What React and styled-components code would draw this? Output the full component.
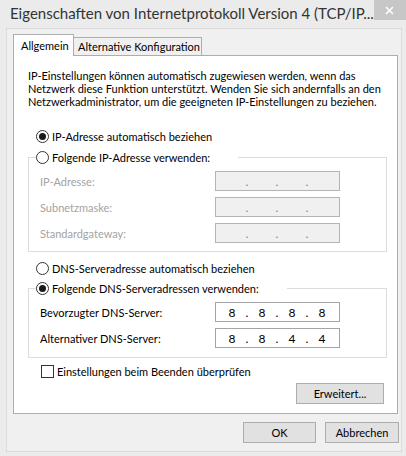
import React from "react";
import styled, { createGlobalStyle } from "styled-components";

const GlobalStyle = createGlobalStyle`
  html, body {
    margin: 0;
    padding: 0;
  }
  body {
    width: 406px;
    height: 456px;
    overflow: hidden;
    background: #ebebeb;
    font-family: Lato, "Liberation Sans", sans-serif;
    font-size: 11px;
    color: #000;
  }
`;

const Window = styled.div`
  width: 406px;
  height: 456px;
  display: flex;
  flex-direction: column;
  background: #ebebeb;
`;

const TitleBar = styled.div`
  height: 28px;
  flex-shrink: 0;
  display: flex;
  align-items: flex-start;
`;

const Title = styled.div`
  flex: 1;
  padding: 4px 0 0 10px;
  font-size: 15px;
  line-height: 18px;
  color: #333;
  white-space: nowrap;
`;

const CloseBox = styled.div`
  width: 33px;
  height: 20px;
  background: #c7c7c7;
  display: flex;
  align-items: center;
  justify-content: center;
`;

const Client = styled.div`
  flex: 1;
  margin: 0 4px 4px 6px;
  border: 1px solid #dadada;
  background: #f0f0f0;
  display: flex;
  flex-direction: column;
  padding: 5px 2px 8px 6px;
`;

const TabStrip = styled.div`
  display: flex;
  align-items: flex-end;
  height: 21px;
  position: relative;
  z-index: 1;
`;

const Tab = styled.div`
  box-sizing: border-box;
  width: ${(p) => p.$w}px;
  height: ${(p) => (p.$active ? 22 : 18)}px;
  margin-bottom: ${(p) => (p.$active ? -1 : 0)}px;
  border: 1px solid #adadad;
  border-bottom: none;
  border-left-width: ${(p) => (p.$active ? 1 : 0)}px;
  background: ${(p) => (p.$active ? "#fff" : "#f0f0f0")};
  padding: ${(p) => (p.$active ? "4px 0 0 7px" : "2px 0 0 4px")};
  line-height: 14px;
  white-space: nowrap;
`;

const Panel = styled.div`
  flex: 1;
  margin-right: 1px;
  border: 1px solid #adadad;
  background: #fff;
  display: flex;
  flex-direction: column;
  padding: 13px 0 9px 0;
`;

const Intro = styled.p`
  margin: 0 0 0 14px;
  line-height: 13px;
  white-space: nowrap;
`;

const OptionRow = styled.label`
  display: flex;
  align-items: center;
  height: 16px;
  margin-top: ${(p) => p.$gap}px;
  padding-left: ${(p) => p.$indent}px;
  white-space: nowrap;
`;

const RadioDot = styled.span`
  box-sizing: border-box;
  width: 13px;
  height: 13px;
  margin-right: 3px;
  border: 1px solid #333;
  border-radius: 50%;
  background: #fff;
  display: flex;
  align-items: center;
  justify-content: center;
  &::after {
    content: "";
    width: 7px;
    height: 7px;
    border-radius: 50%;
    background: ${(p) => (p.$on ? "#1a1a1a" : "transparent")};
  }
`;

const CheckBox = styled.span`
  box-sizing: border-box;
  width: 13px;
  height: 13px;
  margin-right: 3px;
  border: 1px solid #333;
  background: #fff;
`;

const Group = styled.fieldset`
  margin: ${(p) => p.$gap}px 10px 0 14px;
  padding: 6px 0 ${(p) => p.$bottom}px 11px;
  border: 1px solid #dcdcdc;
  min-width: 0;
  display: grid;
  grid-template-columns: 175px 125px;
  row-gap: 6px;
  align-items: center;
`;

const Legend = styled.legend`
  margin-left: -4px;
  padding: 0 28px 0 0;
  height: 16px;
`;

const LegendOption = styled.span`
  display: flex;
  align-items: center;
  height: 16px;
  white-space: nowrap;
`;

const FieldLabel = styled.span`
  color: ${(p) => (p.$disabled ? "#a3a3a3" : "#000")};
  white-space: nowrap;
`;

const AddressBox = styled.div`
  box-sizing: border-box;
  width: 125px;
  height: 20px;
  border: 1px solid ${(p) => (p.$disabled ? "#b4b4b4" : "#a5a5a5")};
  background: ${(p) => (p.$disabled ? "#f0f0f0" : "#fff")};
  padding-left: 5px;
  display: flex;
  align-items: center;
  font-size: 12px;
`;

const Octet = styled.span`
  width: 22px;
  text-align: center;
`;

const Dot = styled.span`
  width: 8px;
  text-align: center;
  color: ${(p) => (p.$disabled ? "#7f7f9f" : "#000")};
`;

const ButtonRow = styled.div`
  display: flex;
  justify-content: flex-end;
  gap: ${(p) => p.$gap || 9}px;
  margin-top: ${(p) => p.$top}px;
  padding-right: ${(p) => p.$right || 0}px;
`;

const Button = styled.button`
  box-sizing: border-box;
  width: ${(p) => p.$w}px;
  height: 21px;
  border: 1px solid #adadad;
  background: #e1e1e1;
  font-family: inherit;
  font-size: 11px;
  color: #000;
  padding: 0;
`;

const AddressField = ({ value, disabled }) => {
  const parts = value ? value.split(".") : ["", "", "", ""];
  return (
    <AddressBox $disabled={disabled}>
      {parts.map((p, i) => (
        <React.Fragment key={i}>
          <Octet>{p}</Octet>
          {i < 3 && <Dot $disabled={disabled}>.</Dot>}
        </React.Fragment>
      ))}
    </AddressBox>
  );
};

const ipRows = ["IP-Adresse:", "Subnetzmaske:", "Standardgateway:"];

const dnsRows = [
  { label: "Bevorzugter DNS-Server:", value: "8.8.8.8" },
  { label: "Alternativer DNS-Server:", value: "8.8.4.4" },
];

export default function App() {
  return (
    <>
      <GlobalStyle />
      <Window>
        <TitleBar>
          <Title>Eigenschaften von Internetprotokoll Version 4 (TCP/IP...</Title>
          <CloseBox>
            <svg width="9" height="9" viewBox="0 0 9 9">
              <path d="M1 1L8 8M8 1L1 8" stroke="#fff" strokeWidth="1.6" />
            </svg>
          </CloseBox>
        </TitleBar>

        <Client>
          <TabStrip>
            <Tab $active $w={61}>Allgemein</Tab>
            <Tab $w={128}>Alternative Konfiguration</Tab>
          </TabStrip>

          <Panel>
            <Intro>
              IP-Einstellungen können automatisch zugewiesen werden, wenn das
              <br />
              Netzwerk diese Funktion unterstützt. Wenden Sie sich andernfalls an den
              <br />
              Netzwerkadministrator, um die geeigneten IP-Einstellungen zu beziehen.
            </Intro>

            <OptionRow $gap={20} $indent={22}>
              <RadioDot $on />
              IP-Adresse automatisch beziehen
            </OptionRow>

            <Group $gap={5} $bottom={8}>
              <Legend>
                <LegendOption>
                  <RadioDot />
                  Folgende IP-Adresse verwenden:
                </LegendOption>
              </Legend>
              {ipRows.map((label) => (
                <React.Fragment key={label}>
                  <FieldLabel $disabled>{label}</FieldLabel>
                  <AddressField disabled />
                </React.Fragment>
              ))}
            </Group>

            <OptionRow $gap={8} $indent={22}>
              <RadioDot />
              DNS-Serveradresse automatisch beziehen
            </OptionRow>

            <Group $gap={4} $bottom={9}>
              <Legend>
                <LegendOption>
                  <RadioDot $on />
                  Folgende DNS-Serveradressen verwenden:
                </LegendOption>
              </Legend>
              {dnsRows.map((row) => (
                <React.Fragment key={row.label}>
                  <FieldLabel>{row.label}</FieldLabel>
                  <AddressField value={row.value} />
                </React.Fragment>
              ))}
            </Group>

            <OptionRow $gap={5} $indent={27}>
              <CheckBox />
              Einstellungen beim Beenden überprüfen
            </OptionRow>

            <ButtonRow $top={4} $right={13}>
              <Button $w={88}>Erweitert...</Button>
            </ButtonRow>
          </Panel>

          <ButtonRow $top={8}>
            <Button $w={73}>OK</Button>
            <Button $w={74}>Abbrechen</Button>
          </ButtonRow>
        </Client>
      </Window>
    </>
  );
}
